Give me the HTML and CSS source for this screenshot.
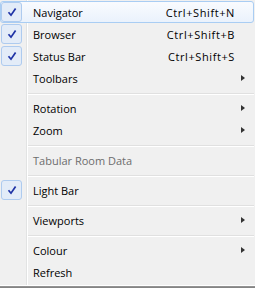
FILE: index.html
```html
<!DOCTYPE html>
<html lang="en">
<head>
  <meta charset="UTF-8">
  <title>View Menu</title>
  <link rel="stylesheet" href="styles.css">
</head>
<body>

<div class="menu">
  <div class="item hot checked">
    <span class="icon"><span class="check"><svg width="10" height="10" viewBox="0 0 10 10"><path d="M1.5 5.2 L4 8.2 L8.6 1.4"/></svg></span></span>
    <span class="label">Navigator</span>
    <span class="keys">Ctrl+Shift+N</span>
    <span class="arrow"></span>
  </div>
  <div class="item checked">
    <span class="icon"><span class="check"><svg width="10" height="10" viewBox="0 0 10 10"><path d="M1.5 5.2 L4 8.2 L8.6 1.4"/></svg></span></span>
    <span class="label">Browser</span>
    <span class="keys">Ctrl+Shift+B</span>
    <span class="arrow"></span>
  </div>
  <div class="item checked">
    <span class="icon"><span class="check"><svg width="10" height="10" viewBox="0 0 10 10"><path d="M1.5 5.2 L4 8.2 L8.6 1.4"/></svg></span></span>
    <span class="label">Status Bar</span>
    <span class="keys">Ctrl+Shift+S</span>
    <span class="arrow"></span>
  </div>
  <div class="item">
    <span class="icon"></span>
    <span class="label">Toolbars</span>
    <span class="keys"></span>
    <span class="arrow sub"></span>
  </div>

  <div class="sep"></div>

  <div class="item">
    <span class="icon"></span>
    <span class="label">Rotation</span>
    <span class="keys"></span>
    <span class="arrow sub"></span>
  </div>
  <div class="item">
    <span class="icon"></span>
    <span class="label">Zoom</span>
    <span class="keys"></span>
    <span class="arrow sub"></span>
  </div>

  <div class="sep"></div>

  <div class="item disabled">
    <span class="icon"></span>
    <span class="label">Tabular Room Data</span>
    <span class="keys"></span>
    <span class="arrow"></span>
  </div>

  <div class="sep"></div>

  <div class="item checked">
    <span class="icon"><span class="check"><svg width="10" height="10" viewBox="0 0 10 10"><path d="M1.5 5.2 L4 8.2 L8.6 1.4"/></svg></span></span>
    <span class="label">Light Bar</span>
    <span class="keys"></span>
    <span class="arrow"></span>
  </div>

  <div class="sep"></div>

  <div class="item">
    <span class="icon"></span>
    <span class="label">Viewports</span>
    <span class="keys"></span>
    <span class="arrow sub"></span>
  </div>

  <div class="sep"></div>

  <div class="item">
    <span class="icon"></span>
    <span class="label">Colour</span>
    <span class="keys"></span>
    <span class="arrow sub"></span>
  </div>
  <div class="item">
    <span class="icon"></span>
    <span class="label">Refresh</span>
    <span class="keys"></span>
    <span class="arrow"></span>
  </div>
</div>

<div class="shadow"></div>

</body>
</html>
```

FILE: styles.css
```css
body {
  margin: 0;
  padding: 0;
  background: #f0f0f0;
  font-family: "Open Sans", "Liberation Sans", sans-serif;
  font-size: 11px;
  color: #000;
}
.menu {
  width: 255px;
  height: 285px;
  box-sizing: border-box;
  padding-top: 1px;
  background:
    linear-gradient(to right, transparent 26px, #e2e3e3 26px, #e2e3e3 27px, #fff 27px, #fff 28px, transparent 28px),
    #f0f0f0;
  display: flex;
  flex-direction: column;
}
.item {
  height: 22px;
  display: grid;
  grid-template-columns: 32px 1fr auto 18px;
  align-items: center;
  box-sizing: border-box;
  margin-right: 1px;
  border: 1px solid transparent;
  border-radius: 3px;
}
.item.hot {
  background: linear-gradient(#f9fbfe, #eaf2fc);
  border-color: #a9cdf3;
}
.icon {
  height: 100%;
  display: flex;
  align-items: center;
}
.check {
  width: 21px;
  height: 20px;
  box-sizing: border-box;
  border: 1px solid #aecbef;
  border-radius: 3px;
  background: #e3ecf8;
  display: flex;
  align-items: center;
  justify-content: center;
}
.check svg path {
  fill: none;
  stroke: #1f33a6;
  stroke-width: 1.7;
}
.keys {
  text-align: right;
  letter-spacing: 0.6px;
}
.arrow.sub {
  justify-self: start;
  width: 0;
  height: 0;
  margin-left: 6px;
  border-left: 4px solid #333;
  border-top: 3.5px solid transparent;
  border-bottom: 3.5px solid transparent;
}
.disabled .label {
  color: #6d6d6d;
}
.sep {
  height: 0;
  margin: 4px 1px 2px 28px;
  border-top: 1px solid #e0e0e0;
  border-bottom: 1px solid #fff;
}
.shadow {
  height: 3px;
  background: linear-gradient(#fff 0, #fff 1px, #9a9a9a 1px, #7c7c7c);
}
```
